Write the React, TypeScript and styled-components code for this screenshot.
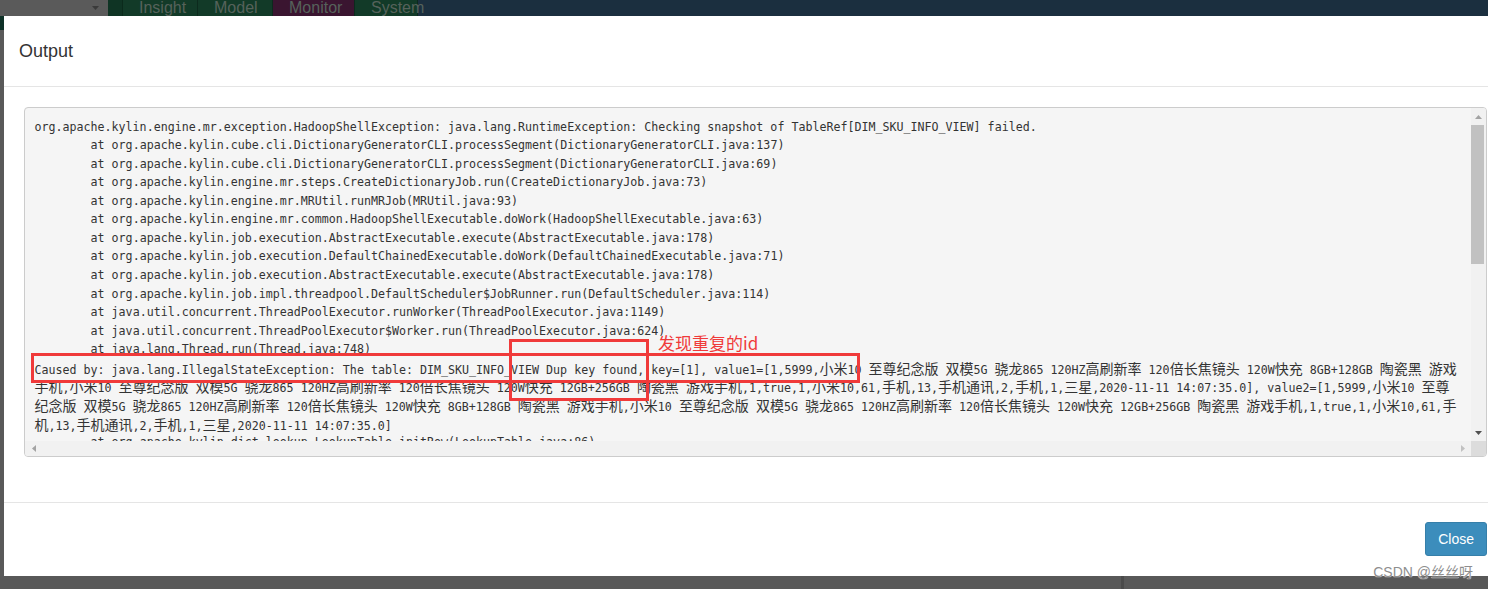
import React from "react";
import styled, { createGlobalStyle } from "styled-components";

const Global = createGlobalStyle`
  html, body { margin: 0; padding: 0; overflow: hidden; background: #585858; }
  #root { width: 1488px; height: 589px; }
`;

const Page = styled.div`
  position: relative;
  width: 1488px;
  height: 589px;
  display: grid;
  grid-template-rows: 16px 560px 13px;
  overflow: hidden;
  font-family: "Liberation Sans", Arial, sans-serif;
`;

/* ---------- dimmed navbar behind the modal ---------- */
const TopBar = styled.div`
  display: flex;
  height: 16px;
  background: #1b2f3f;
  overflow: hidden;
`;

const SelectStub = styled.div`
  width: 108px;
  flex: none;
  background: #5a5a5a;
  display: flex;
  justify-content: flex-end;
  align-items: center;
  padding-right: 9px;
  box-sizing: border-box;
`;

const NavSpacer = styled.div`
  width: 15px;
  flex: none;
  background: #0f3424;
  border-right: 1px solid #0b2a1c;
  box-sizing: border-box;
`;

const NavTab = styled.div<{ $w: number; $tone: "green" | "purple" }>`
  width: ${(p) => p.$w}px;
  flex: none;
  box-sizing: border-box;
  padding-left: 16px;
  background: ${(p) => (p.$tone === "purple" ? "#3a1530" : "#123a28")};
  border-right: 1px solid #0c2a1d;
  color: #56625b;
  font-size: 16px;
  line-height: 16px;
  white-space: nowrap;
`;

/* ---------- middle ---------- */
const Middle = styled.div`
  display: grid;
  grid-template-columns: 4px 1fr;
`;

const LeftStrip = styled.div`
  background: linear-gradient(#0e3127 0 14px, #595959 14px);
`;

const Modal = styled.div`
  background: #fff;
  display: flex;
  flex-direction: column;
  height: 560px;
`;

const Header = styled.div`
  height: 71px;
  box-sizing: border-box;
  border-bottom: 1px solid #e5e5e5;
  padding: 1px 15px 0;
  display: flex;
  align-items: center;
`;

const Title = styled.h4`
  margin: 0;
  font-size: 18px;
  font-weight: 400;
  color: #333;
`;

const Body = styled.div`
  height: 415px;
  box-sizing: border-box;
  padding: 20px 1px 45px 20px;
`;

const Pre = styled.div`
  height: 350px;
  box-sizing: border-box;
  border: 1px solid #ccc;
  border-radius: 4px;
  background: #f5f5f5;
  overflow: hidden;
  display: grid;
  grid-template-columns: 1fr 15px;
  grid-template-rows: 1fr 15px;
`;

const Content = styled.div`
  position: relative;
  overflow: hidden;
  padding: 9.5px 0 0 9.5px;
  font-family: "DejaVu Sans Mono", "Liberation Mono", monospace;
  font-size: 11.65px;
  line-height: 18.57px;
  color: #333;
  tab-size: 8;
`;

const Line = styled.div`
  height: 18.57px;
  white-space: pre;
`;

const Cjk = styled.span`
  font-family: "Noto Sans CJK SC", sans-serif;
  font-size: 14px;
`;

/* scrollbars */
const VScroll = styled.div`
  background: #f1f1f1;
  display: flex;
  flex-direction: column;
`;

const HScroll = styled.div`
  background: #f1f1f1;
  display: flex;
`;

const ArrowBtn = styled.div<{ $horizontal?: boolean }>`
  flex: none;
  ${(p) => (p.$horizontal ? "width: 17px;" : "height: 17px;")}
  display: flex;
  align-items: center;
  justify-content: center;
`;

const Track = styled.div`
  flex: 1;
`;

const Thumb = styled.div`
  height: 139px;
  margin: 0 2px 0 0;
  background: #c1c1c1;
`;

const Corner = styled.div`
  background: #dcdcdc;
`;

/* annotations drawn over the log */
const RedBox = styled.div<{ $x: number; $y: number; $w: number; $h: number }>`
  position: absolute;
  left: ${(p) => p.$x}px;
  top: ${(p) => p.$y}px;
  width: ${(p) => p.$w}px;
  height: ${(p) => p.$h}px;
  box-sizing: border-box;
  border: 3px solid #f03a3a;
`;

const RedLabel = styled.div`
  position: absolute;
  left: 633px;
  top: 224px;
  font-family: "Noto Sans CJK SC", sans-serif;
  font-size: 17px;
  line-height: 22px;
  color: #f03a3a;
  white-space: nowrap;
`;

const Footer = styled.div`
  flex: 1;
  border-top: 1px solid #e5e5e5;
  padding: 19px 1px 0 0;
  display: flex;
  justify-content: flex-end;
  align-items: flex-start;
`;

const Button = styled.button`
  height: 34px;
  padding: 0 12px;
  background: #3c8dbc;
  border: 1px solid #367fa9;
  border-radius: 3px;
  color: #fff;
  font-family: "Liberation Sans", Arial, sans-serif;
  font-size: 14px;
  cursor: pointer;
`;

/* ---------- bottom ---------- */
const BottomBar = styled.div`
  background: #585858;
  display: flex;
`;

const BottomLeft = styled.div`
  width: 1121px;
  flex: none;
  border-right: 3px solid #4a4a4a;
`;

const Watermark = styled.div`
  position: absolute;
  right: 15px;
  bottom: 8px;
  font-size: 14px;
  color: #8e8e8e;
  text-shadow: 0 0 1px #fff, 0 0 1px #fff;
  font-family: "Liberation Sans", "Noto Sans CJK SC", sans-serif;
  white-space: nowrap;
`;

const Tri = ({ dir, color }: { dir: "up" | "down" | "left" | "right"; color: string }) => {
  const pts =
    dir === "up"
      ? "0,4 3.5,0 7,4"
      : dir === "down"
      ? "0,0 7,0 3.5,4"
      : dir === "left"
      ? "4,0 4,7 0,3.5"
      : "0,0 0,7 4,3.5";
  const vertical = dir === "up" || dir === "down";
  return (
    <svg width={vertical ? 7 : 4} height={vertical ? 4 : 7} viewBox={vertical ? "0 0 7 4" : "0 0 4 7"}>
      <polygon points={pts} fill={color} />
    </svg>
  );
};

const CJK_RE = /([\u2E80-\u9FFF\uF900-\uFAFF\uFF00-\uFFEF]+)/;
const renderText = (s: string) =>
  s.split(CJK_RE).map((part, i) => (i % 2 === 1 ? <Cjk key={i}>{part}</Cjk> : part));

const LOG: string[] = [
  "org.apache.kylin.engine.mr.exception.HadoopShellException: java.lang.RuntimeException: Checking snapshot of TableRef[DIM_SKU_INFO_VIEW] failed.",
  "\tat org.apache.kylin.cube.cli.DictionaryGeneratorCLI.processSegment(DictionaryGeneratorCLI.java:137)",
  "\tat org.apache.kylin.cube.cli.DictionaryGeneratorCLI.processSegment(DictionaryGeneratorCLI.java:69)",
  "\tat org.apache.kylin.engine.mr.steps.CreateDictionaryJob.run(CreateDictionaryJob.java:73)",
  "\tat org.apache.kylin.engine.mr.MRUtil.runMRJob(MRUtil.java:93)",
  "\tat org.apache.kylin.engine.mr.common.HadoopShellExecutable.doWork(HadoopShellExecutable.java:63)",
  "\tat org.apache.kylin.job.execution.AbstractExecutable.execute(AbstractExecutable.java:178)",
  "\tat org.apache.kylin.job.execution.DefaultChainedExecutable.doWork(DefaultChainedExecutable.java:71)",
  "\tat org.apache.kylin.job.execution.AbstractExecutable.execute(AbstractExecutable.java:178)",
  "\tat org.apache.kylin.job.impl.threadpool.DefaultScheduler$JobRunner.run(DefaultScheduler.java:114)",
  "\tat java.util.concurrent.ThreadPoolExecutor.runWorker(ThreadPoolExecutor.java:1149)",
  "\tat java.util.concurrent.ThreadPoolExecutor$Worker.run(ThreadPoolExecutor.java:624)",
  "\tat java.lang.Thread.run(Thread.java:748)",
  "Caused by: java.lang.IllegalStateException: The table: DIM_SKU_INFO_VIEW Dup key found, key=[1], value1=[1,5999,小米10 至尊纪念版 双模5G 骁龙865 120HZ高刷新率 120倍长焦镜头 120W快充 8GB+128GB 陶瓷黑 游戏",
  "手机,小米10 至尊纪念版 双模5G 骁龙865 120HZ高刷新率 120倍长焦镜头 120W快充 12GB+256GB 陶瓷黑 游戏手机,1,true,1,小米10,61,手机,13,手机通讯,2,手机,1,三星,2020-11-11 14:07:35.0], value2=[1,5999,小米10 至尊",
  "纪念版 双模5G 骁龙865 120HZ高刷新率 120倍长焦镜头 120W快充 8GB+128GB 陶瓷黑 游戏手机,小米10 至尊纪念版 双模5G 骁龙865 120HZ高刷新率 120倍长焦镜头 120W快充 12GB+256GB 陶瓷黑 游戏手机,1,true,1,小米10,61,手",
  "机,13,手机通讯,2,手机,1,三星,2020-11-11 14:07:35.0]",
  "\tat org.apache.kylin.dict.lookup.LookupTable.initRow(LookupTable.java:86)",
];

const TABS: { label: string; w: number; tone: "green" | "purple" }[] = [
  { label: "Insight", w: 75, tone: "green" },
  { label: "Model", w: 75, tone: "green" },
  { label: "Monitor", w: 82, tone: "purple" },
  { label: "System", w: 63, tone: "green" },
];

export default function App() {
  return (
    <>
      <Global />
      <Page>
        <TopBar>
          <SelectStub>
            <Tri dir="down" color="#3a3a3a" />
          </SelectStub>
          <NavSpacer />
          {TABS.map((t) => (
            <NavTab key={t.label} $w={t.w} $tone={t.tone}>
              {t.label}
            </NavTab>
          ))}
        </TopBar>

        <Middle>
          <LeftStrip />
          <Modal>
            <Header>
              <Title>Output</Title>
            </Header>
            <Body>
              <Pre>
                <Content>
                  {LOG.map((l, i) => (
                    <Line key={i}>{renderText(l)}</Line>
                  ))}
                  <RedBox $x={6} $y={245} $w={829} $h={30} />
                  <RedBox $x={484} $y={231} $w={140} $h={62} />
                  <RedLabel>发现重复的id</RedLabel>
                </Content>
                <VScroll>
                  <ArrowBtn>
                    <Tri dir="up" color="#a3a3a3" />
                  </ArrowBtn>
                  <Track>
                    <Thumb />
                  </Track>
                  <ArrowBtn>
                    <Tri dir="down" color="#505050" />
                  </ArrowBtn>
                </VScroll>
                <HScroll>
                  <ArrowBtn $horizontal>
                    <Tri dir="left" color="#a3a3a3" />
                  </ArrowBtn>
                  <Track />
                  <ArrowBtn $horizontal>
                    <Tri dir="right" color="#c1c1c1" />
                  </ArrowBtn>
                </HScroll>
                <Corner />
              </Pre>
            </Body>
            <Footer>
              <Button>Close</Button>
            </Footer>
          </Modal>
        </Middle>

        <BottomBar>
          <BottomLeft />
        </BottomBar>

        <Watermark>CSDN @丝丝呀</Watermark>
      </Page>
    </>
  );
}
